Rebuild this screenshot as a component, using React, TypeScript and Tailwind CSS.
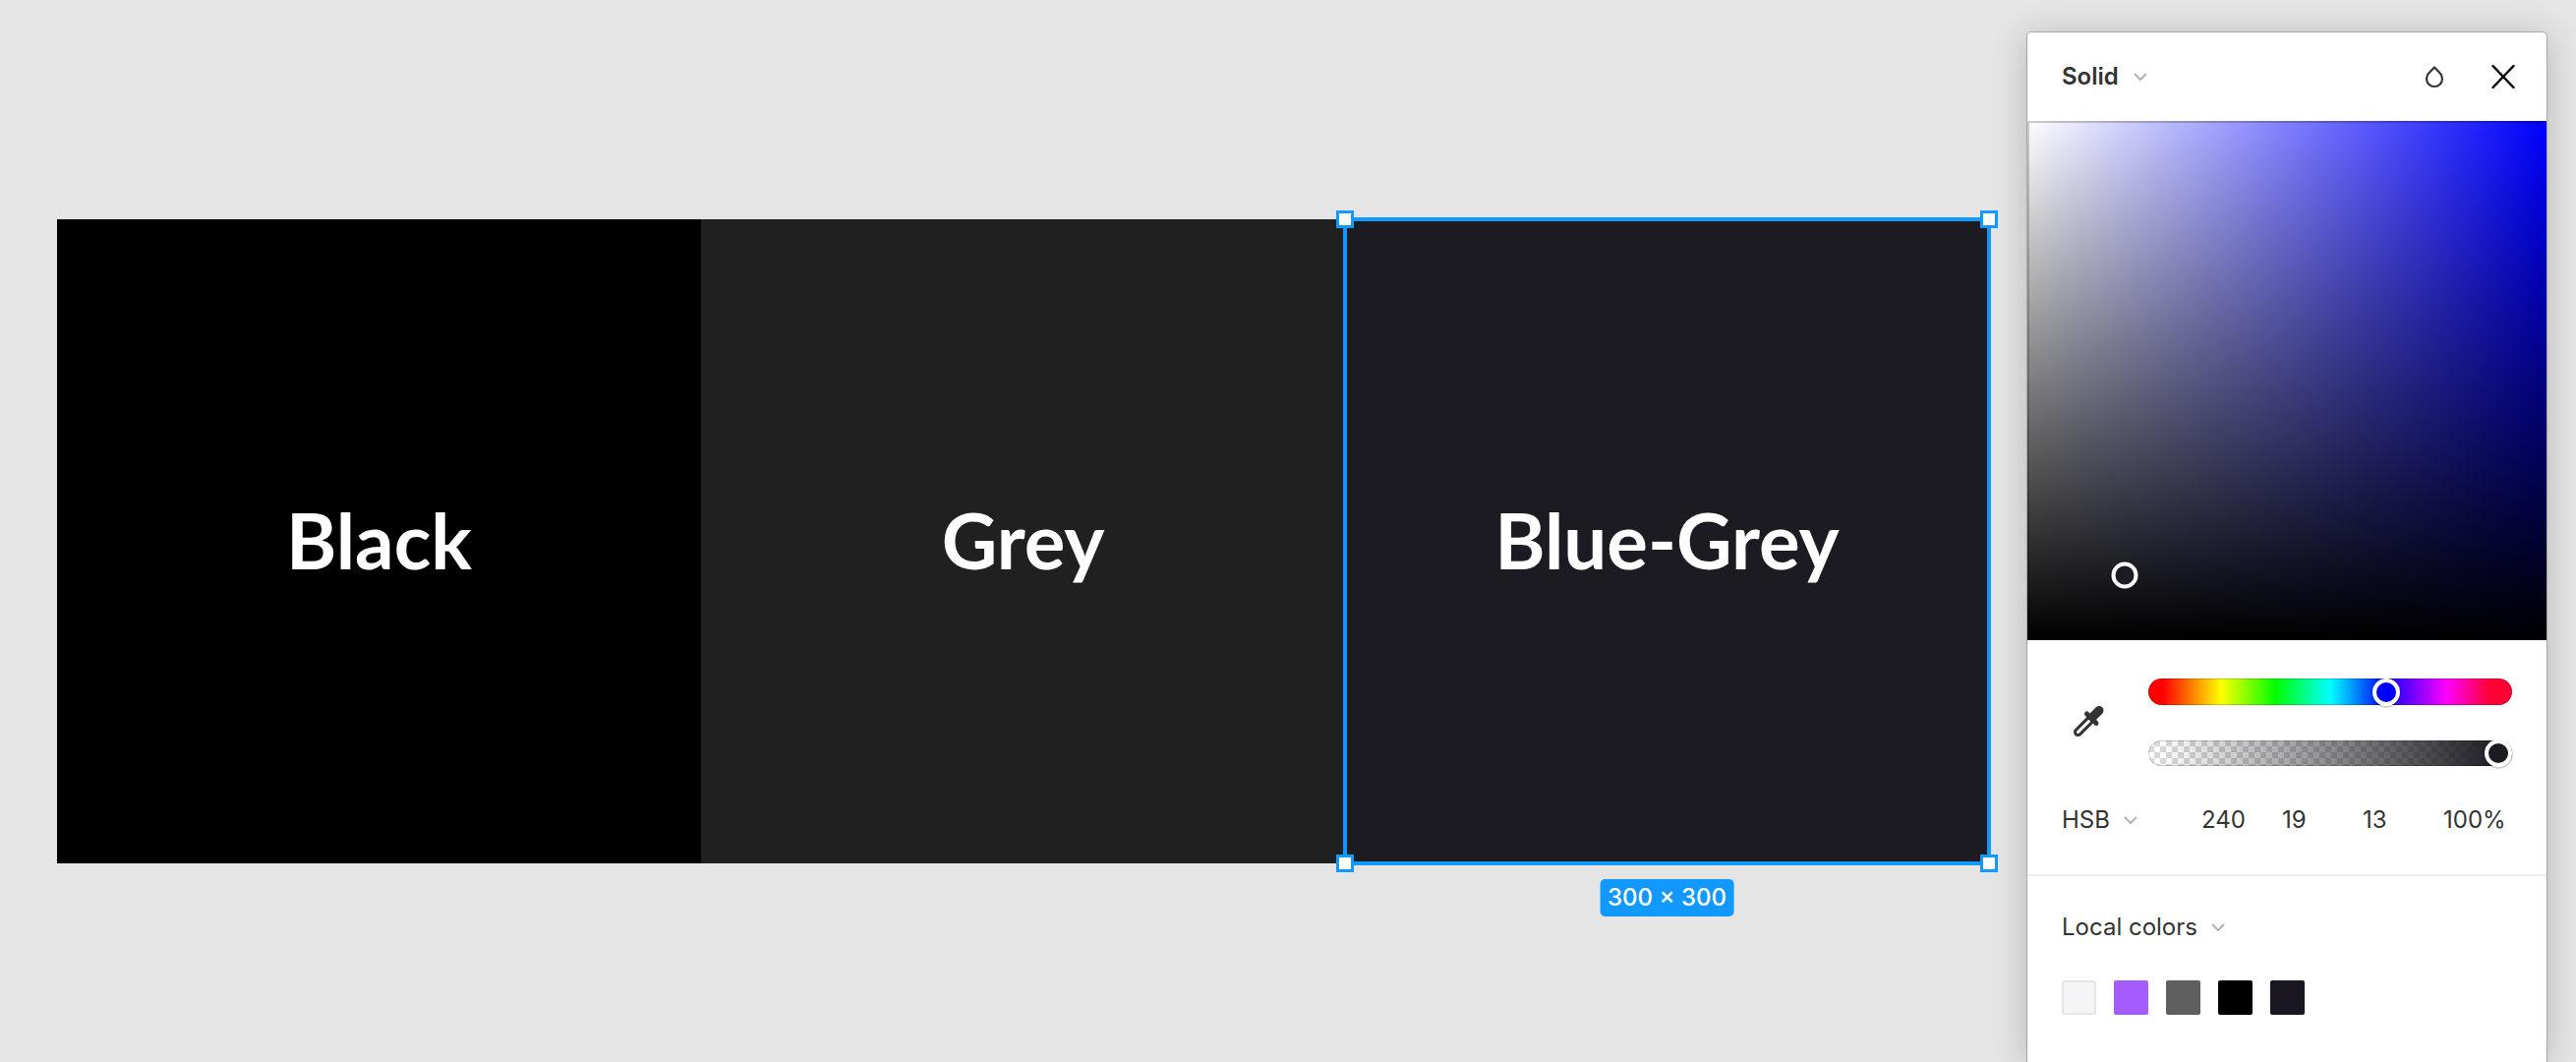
import React from "react";

const tiles = [
  { name: "Black", bg: "bg-black", selected: false },
  { name: "Grey", bg: "bg-[#202020]", selected: false },
  { name: "Blue-Grey", bg: "bg-[#1b1b21]", selected: true },
];

const handles = [
  "-top-[9px] -left-[9px]",
  "-top-[9px] -right-[9px]",
  "-bottom-[9px] -left-[9px]",
  "-bottom-[9px] -right-[9px]",
];

const swatches = [
  { name: "Off white", look: "bg-[#f5f5f7] border-2 border-[#e6e6e6]" },
  { name: "Purple", look: "bg-[#a45cff]" },
  { name: "Dark grey", look: "bg-[#5f5f5f]" },
  { name: "Black", look: "bg-black" },
  { name: "Blue grey", look: "bg-[#1a1721]" },
];

function Chevron() {
  return (
    <svg aria-hidden="true" width="14" height="9" viewBox="0 0 14 9" fill="none" stroke="#b3b3b3" strokeWidth="2.2">
      <path d="M1 1l6 6 6-6" />
    </svg>
  );
}

function Selection() {
  return (
    <div className="pointer-events-none absolute inset-0">
      <div className="absolute -inset-0.5 border-4 border-[#1199ff]" />
      {handles.map((h) => (
        <span key={h} className={`absolute size-[18px] border-[3px] border-[#1199ff] bg-white ${h}`} />
      ))}
      <div className="absolute top-full left-1/2 mt-4 h-[38px] -translate-x-1/2 rounded-[5px] bg-[#1199ff] px-2 text-2xl leading-[38px] font-medium whitespace-nowrap text-white">
        300 × 300
      </div>
    </div>
  );
}

function Track({ label, max, value, unit, className }: {
  label: string; max: number; value: number; unit: string; className: string;
}) {
  return (
    <input
      type="range"
      aria-label={label}
      min={0}
      max={max}
      defaultValue={value}
      aria-valuetext={`${value}${unit}`}
      className={`block w-full cursor-pointer appearance-none rounded-full shadow-[inset_0_0_0_1px_rgba(0,0,0,0.18)] [&::-webkit-slider-thumb]:size-7 [&::-webkit-slider-thumb]:appearance-none [&::-webkit-slider-thumb]:rounded-full [&::-webkit-slider-thumb]:border-4 [&::-webkit-slider-thumb]:border-white [&::-webkit-slider-thumb]:shadow-[0_1px_0_1px_rgba(0,0,0,0.18)] ${className}`}
    />
  );
}

export default function App() {
  return (
    <div className="flex h-screen items-start overflow-hidden bg-[#e5e5e5] pr-[29px] pl-[58px] font-['Inter',sans-serif] text-2xl text-[#333]">
      <main className="mt-[223px] mr-[38px] grid flex-1 grid-cols-3">
        {tiles.map((t) => (
          <section key={t.name} className={`relative flex aspect-square items-center justify-center pb-1 ${t.bg}`}>
            <h2 className="font-['Lato',sans-serif] text-[78px] leading-none font-bold text-white">{t.name}</h2>
            {t.selected && <Selection />}
          </section>
        ))}
      </main>

      <aside className="mt-8 w-[530px] shrink-0 self-stretch overflow-hidden rounded-t-[5px] border border-b-0 border-[#a8a8a8] bg-white shadow-[0_4px_36px_rgba(0,0,0,0.2)]">
        <header className="flex h-[90px] items-center pr-8 pl-[35px]">
          <button className="flex items-center gap-[15px] font-semibold">
            Solid
            <Chevron />
          </button>
          <button aria-label="Blend mode" className="mr-12 ml-auto">
            <svg width="20" height="24" viewBox="0 0 20 24" fill="none" stroke="#333" strokeWidth="2.2" strokeLinejoin="round">
              <path d="M10 2.500 L4.800 7.800 C3 9.700 2 11.700 2 14 C2 18.600 5.600 22 10 22 C14.400 22 18 18.600 18 14 C18 11.700 17 9.700 15.200 7.800Z" />
            </svg>
          </button>
          <button aria-label="Close">
            <svg width="24" height="26" viewBox="0 0 24 26" fill="none" stroke="#000" strokeWidth="2.400" strokeLinecap="round">
              <path d="M1.500 2l21 22M22.500 2L1.500 24" />
            </svg>
          </button>
        </header>

        <div className="relative aspect-square bg-[linear-gradient(to_top,#000,transparent),linear-gradient(to_right,#fff,#00f)] shadow-[inset_1px_1px_0_1px_rgba(0,0,0,0.2)]">
          <span className="absolute top-[87.500%] left-[18.800%] size-[27px] -translate-1/2 rounded-full border-4 border-white bg-[#1b1b21]" />
        </div>

        <div className="flex items-center pt-[39px] pr-[35px] pl-[46px]">
          <button aria-label="Pick color" className="mr-[45px] mb-1">
            <svg width="32" height="32" viewBox="0 0 32 32" fill="none" stroke="#333" strokeLinecap="round">
              <path d="M5.500 27.500L18 15" strokeWidth="9" />
              <path d="M5.500 27.500L16.500 16.500" stroke="#fff" strokeWidth="3" />
              <path d="M27 5.500L21 11.500" strokeWidth="9" />
              <path d="M14.500 9L24 18.500" strokeWidth="5" />
            </svg>
          </button>
          <div className="grid flex-1 gap-9">
            <Track label="Hue" max={360} value={240} unit="°" className="h-[27px] bg-[linear-gradient(to_right,#f00_4%,#ff0_20%,#0f0_35%,#0ff_50%,#00f_65%,#f0f_82%,#f03_94%)] [&::-webkit-slider-thumb]:bg-[#00f]" />
            <Track label="Opacity" max={100} value={100} unit="%" className="h-[26px] bg-[linear-gradient(to_right,transparent_3%,#1b1b21_97%),repeating-conic-gradient(#d9d9d9_0_25%,#fff_0_50%)] bg-[size:100%_100%,12px_12px] [&::-webkit-slider-thumb]:bg-[#1b1b21]" />
          </div>
        </div>

        <div className="flex h-28 items-center border-b-2 border-[#eee] pl-[35px]">
          <button className="flex w-[142px] items-center gap-[14px]">
            HSB
            <Chevron />
          </button>
          <input aria-label="Hue value" defaultValue="240" className="w-[82px]" />
          <input aria-label="Saturation value" defaultValue="19" className="w-[82px]" />
          <input aria-label="Brightness value" defaultValue="13" className="w-[82px]" />
          <input aria-label="Opacity value" defaultValue="100%" className="w-[72px]" />
        </div>

        <div className="px-[35px] pt-9">
          <button className="flex items-center gap-[14px]">
            Local colors
            <Chevron />
          </button>
          <div className="mt-[38px] flex gap-[18px]">
            {swatches.map((s) => (
              <button key={s.name} aria-label={s.name} className={`size-[35px] rounded-[2px] ${s.look}`} />
            ))}
          </div>
        </div>
      </aside>
    </div>
  );
}
